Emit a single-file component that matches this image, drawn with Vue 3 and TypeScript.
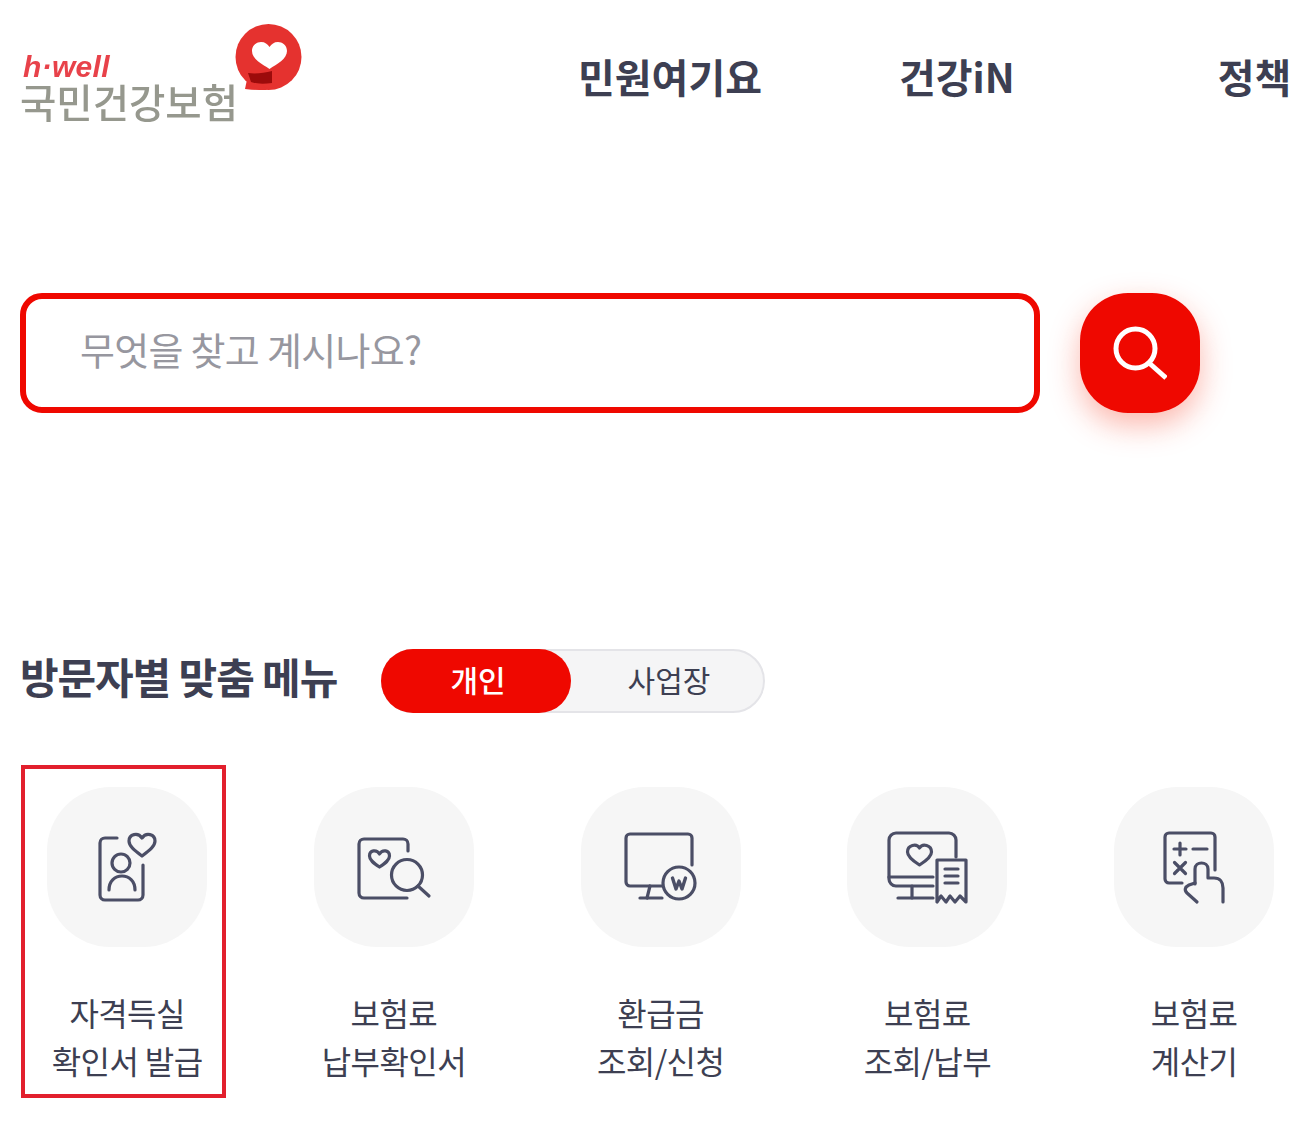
<template>
  <div class="page">
    <header class="top">
      <a class="logo">
        <div class="logo-text">
          <span class="logo-well">h·well</span>
          <span class="logo-name">국민건강보험</span>
        </div>
        <svg class="logo-mark" width="68" height="68" viewBox="0 0 68 68">
          <circle cx="33.500" cy="33" r="33" fill="#e5322f" />
          <path d="M14 46L10 65c7 1 14 1 22 1z" fill="#e5322f" />
          <path d="M34.500 45C27 40 17 35 17 27c0-6 5-9 9-9 4 0 6.500 2 8.500 5 2-3 4.500-5 8.500-5 4 0 9 3 9 9 0 8-10 13-17.500 18z" fill="#fff" />
          <path d="M13 49c8 1 16 0 24-2v12c-8 1-15 1-21-1z" fill="#9c0b0b" />
        </svg>
      </a>
      <nav class="nav">
        <a v-for="item in navItems" :key="item.label" :class="['nav-item', item.cls]">{{ item.label }}</a>
      </nav>
    </header>

    <section class="search">
      <div class="search-box">무엇을 찾고 계시나요?</div>
      <button class="search-btn" type="button" aria-label="검색">
        <svg width="54" height="54" viewBox="0 0 54 54" fill="none" stroke="#fff" stroke-width="5">
          <circle cx="22.500" cy="22.500" r="19.500" />
          <path d="M35 36l18 16" />
        </svg>
      </button>
    </section>

    <section class="visitor">
      <h2 class="visitor-title">방문자별 맞춤 메뉴</h2>
      <div class="toggle">
        <span class="toggle-on">개인</span>
        <span class="toggle-off">사업장</span>
      </div>
    </section>

    <ul class="menu">
      <li v-for="(m, i) in menus" :key="i" :class="['menu-item', { picked: i === 0 }]">
        <div class="menu-icon">
          <svg width="90" height="90" viewBox="0 0 90 90" fill="none" stroke="#4b4e66" stroke-width="3.200" stroke-linecap="round" stroke-linejoin="round">
            <template v-if="i === 0">
              <path d="M35 16H23a5 5 0 0 0-5 5v52a5 5 0 0 0 5 5h33a5 5 0 0 0 5-5V43" />
              <path d="M60 34c-8-6-13-10-13-15 0-7 9-9 13-3 4-6 13-4 13 3 0 5-5 9-13 15z" />
              <circle cx="39" cy="41" r="9" />
              <path d="M27 68c0-9 6-14 13-14s13 5 13 14" />
            </template>
            <template v-else-if="i === 1">
              <path d="M59 29v-7a5 5 0 0 0-5-5H15a5 5 0 0 0-5 5v49a5 5 0 0 0 5 5h43" />
              <path d="M30.500 45c-6-4-10-7-10-11 0-6 7-7 10-2 3-5 10-4 10 2 0 4-4 7-10 11z" />
              <circle cx="58" cy="53" r="15.500" />
              <path d="M69 64l11 10" />
            </template>
            <template v-else-if="i === 2">
              <path d="M46 64H14a4 4 0 0 1-4-4V16a4 4 0 0 1 4-4h58a4 4 0 0 1 4 4v27" />
              <path d="M34 64l-3 12" />
              <path d="M24 76h22" />
              <circle cx="63" cy="61" r="16" />
              <path d="M56.500 56l3.500 11 3-8 3 8 3.500-11" stroke-width="3.400" />
            </template>
            <template v-else-if="i === 3">
              <path d="M74 35V18a7 7 0 0 0-7-7H14a7 7 0 0 0-7 7v39a7 7 0 0 0 7 7h37" />
              <path d="M7 55h44" />
              <path d="M30 64v12" />
              <path d="M16 76h35" />
              <path d="M37.500 43c-8-5-12-9-12-13 0-7 9-9 12-4 3-5 12-3 12 4 0 4-4 8-12 13z" />
              <path d="M55 80V38h29v42l-6-6-5 6-5-6-4 6-5-6-4 6z" />
              <path d="M63 47h13M63 54h13M63 61h13" />
            </template>
            <template v-else>
              <path d="M33 61H20a4 4 0 0 1-4-4V15a4 4 0 0 1 4-4h42a4 4 0 0 1 4 4v33" />
              <path d="M25 27h12M31 21v12M44 27h14M25.500 40.500l11 11M36.500 40.500l-11 11" />
              <path d="M46 62V47c0-8 13-8 13 0v9h6c6 0 9 4 9 10v14" />
              <path d="M46 61l-6 2c-4 2-5 5-2 8l10 9" />
            </template>
          </svg>
        </div>
        <p class="menu-label">{{ m[0] }}<br />{{ m[1] }}</p>
      </li>
    </ul>
  </div>
</template>

<script setup lang="ts">
const navItems = [
  { label: '민원여기요', cls: 'n1' },
  { label: '건강iN', cls: 'n2' },
  { label: '정책', cls: 'n3' },
]

const menus: [string, string][] = [
  ['자격득실', '확인서 발급'],
  ['보험료', '납부확인서'],
  ['환급금', '조회/신청'],
  ['보험료', '조회/납부'],
  ['보험료', '계산기'],
]
</script>

<style>
html,
body {
  margin: 0;
  background: #fff;
}
</style>

<style scoped>
.page {
  width: 1291px;
  height: 1135px;
  overflow: hidden;
  box-sizing: border-box;
  padding-left: 20px;
  font-family: "Noto Sans CJK KR", "Noto Sans", sans-serif;
  color: #3d3f52;
}

.top {
  display: flex;
  height: 293px;
  box-sizing: border-box;
  padding-top: 24px;
}

.logo {
  display: flex;
  width: 283px;
  height: 100px;
  flex: none;
  align-items: flex-start;
  filter: blur(0.6px);
}

.logo-text {
  display: flex;
  flex-direction: column;
  width: 215px;
  flex: none;
  margin-top: 28px;
}

.logo-well {
  margin-left: 3px;
  font-family: "Liberation Sans", sans-serif;
  font-size: 30px;
  font-weight: 700;
  font-style: italic;
  line-height: 30px;
  letter-spacing: 0.3px;
  color: #e8424a;
}

.logo-name {
  margin-top: 0;
  font-size: 39.500px;
  font-weight: 500;
  line-height: 38px;
  letter-spacing: 0;
  color: #96988e;
  white-space: nowrap;
}

.logo-mark {
  flex: none;
}

.nav {
  display: flex;
  flex: none;
  height: 104px;
  margin-left: 275px;
  align-items: center;
  font-size: 40px;
  font-weight: 700;
  white-space: nowrap;
}

.nav-item {
  flex: none;
}

.n2 {
  margin-left: 137px;
}

.n3 {
  margin-left: 203px;
}

.search {
  display: flex;
  height: 356px;
  gap: 40px;
  align-items: flex-start;
}

.search-box {
  width: 1020px;
  height: 120px;
  box-sizing: border-box;
  padding-left: 54px;
  border: 6px solid #ef0800;
  border-radius: 22px;
  font-size: 38px;
  font-weight: 400;
  line-height: 100px;
  letter-spacing: -0.7px;
  color: #97979f;
}

.search-btn {
  display: flex;
  width: 120px;
  height: 120px;
  padding: 0;
  align-items: center;
  justify-content: center;
  border: 0;
  border-radius: 48px;
  background: #ef0800;
  box-shadow: 0 12px 30px rgba(245, 50, 20, 0.35);
}

.visitor {
  display: flex;
  height: 64px;
  align-items: center;
}

.visitor-title {
  width: 361px;
  flex: none;
  margin: 0 0 12px;
  font-size: 42px;
  font-weight: 700;
  letter-spacing: -1.1px;
  white-space: nowrap;
}

.toggle {
  display: flex;
  width: 384px;
  height: 64px;
  box-sizing: border-box;
  border: 2px solid #e4e4e8;
  border-radius: 32px;
  background: #f5f5f6;
}

.toggle span {
  display: flex;
  height: 64px;
  box-sizing: border-box;
  padding: 0 0 4px 4px;
  align-items: center;
  justify-content: center;
  font-size: 30px;
}

.toggle-on {
  width: 191px;
  margin: -2px 0 0 -2px;
  border-radius: 32px;
  background: #ef0800;
  color: #fff;
  font-weight: 500;
}

.toggle-off {
  width: 193px;
  margin-top: -2px;
  font-weight: 400;
}

.menu {
  display: grid;
  grid-template-columns: repeat(5, 266.75px);
  margin: 52px 0 0 -26.250px;
  padding: 0;
  list-style: none;
}

.menu-item {
  position: relative;
  display: flex;
  flex-direction: column;
  align-items: center;
  padding-top: 22px;
}

.picked::after {
  content: "";
  position: absolute;
  top: 0;
  left: 27.250px;
  width: 205px;
  height: 333px;
  box-sizing: border-box;
  border: 4px solid #e21f2d;
}

.menu-icon {
  display: flex;
  width: 160px;
  height: 160px;
  align-items: center;
  justify-content: center;
  border-radius: 64px;
  background: #f6f6f6;
}

.menu-label {
  margin: 41px 0 0;
  font-size: 32px;
  line-height: 48px;
  letter-spacing: -0.6px;
  text-align: center;
  white-space: nowrap;
}
</style>
